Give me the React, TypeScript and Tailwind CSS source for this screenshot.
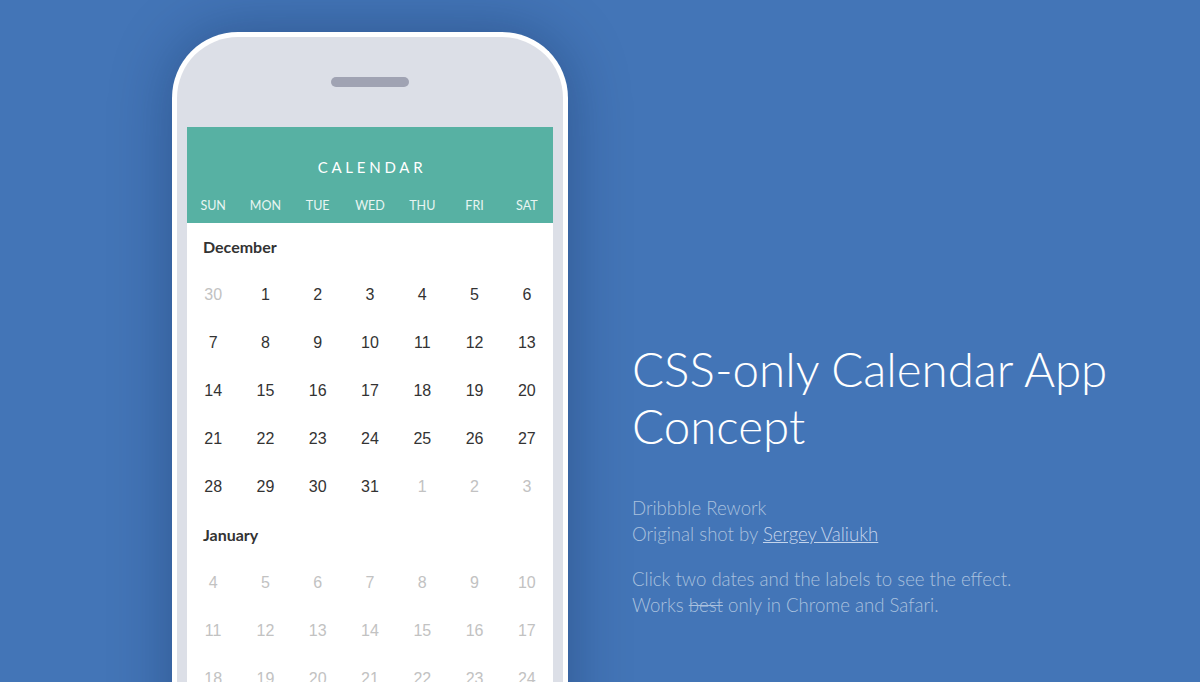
const DAYS = ['SUN', 'MON', 'TUE', 'WED', 'THU', 'FRI', 'SAT']

type Cell = { n: number; muted?: boolean }

const december: Cell[] = [
  { n: 30, muted: true },
  ...Array.from({ length: 31 }, (_, i) => ({ n: i + 1 })),
  { n: 1, muted: true },
  { n: 2, muted: true },
  { n: 3, muted: true },
]

const january: Cell[] = Array.from({ length: 21 }, (_, i) => ({ n: i + 4, muted: true }))

function Month({ name, cells }: { name: string; cells: Cell[] }) {
  return (
    <div>
      <div className="h-[48px] flex items-center px-4 text-[16px] font-bold text-[#333] font-['Lato',sans-serif]">
        {name}
      </div>
      <div className="grid grid-cols-7">
        {cells.map((c, i) => (
          <div
            key={i}
            className={`h-[48px] flex items-center justify-center text-[16px] font-['Liberation_Sans',Arial,sans-serif] ${
              c.muted ? 'text-[#c2c2c2]' : 'text-[#333]'
            }`}
          >
            {c.n}
          </div>
        ))}
      </div>
    </div>
  )
}

export default function App() {
  return (
    <div className="h-[682px] w-[1200px] overflow-hidden bg-[#4375b7] flex items-start font-['Lato',sans-serif]">
      {/* phone */}
      <div className="ml-[172px] mt-[32px] w-[396px] h-[900px] shrink-0 rounded-t-[66px] border-[5px] border-b-0 border-white bg-[#dcdfe7] px-[10px] pt-[40px] shadow-[0_0_60px_rgba(10,30,70,0.35)]">
        <div className="mx-auto w-[78px] h-[10px] rounded-full bg-[#a0a3b3]" />
        <div className="mt-[40px] bg-white h-[800px]">
          <div className="h-[96px] bg-[#57b1a3] flex flex-col">
            <div className="pt-[31px] h-[60px] text-center text-[15px] leading-[18px] tracking-[0.25em] pl-[4px] text-white">
              CALENDAR
            </div>
            <div className="grid grid-cols-7 mt-auto pb-[9px]">
              {DAYS.map((d) => (
                <div key={d} className="text-center text-[12.5px] leading-[16px] text-[#e8f5f2]">
                  {d}
                </div>
              ))}
            </div>
          </div>
          <Month name="December" cells={december} />
          <Month name="January" cells={january} />
        </div>
      </div>

      {/* description */}
      <div className="ml-[64px] pt-[340px] w-[520px] font-light">
        <h1 className="text-[47.5px] leading-[1.2] text-white font-light">
          CSS-only Calendar App Concept
        </h1>
        <p className="mt-[41px] text-[18.6px] leading-[26px] text-[#aac1de]">
          Dribbble Rework
          <br />
          Original shot by{' '}
          <a href="#" className="underline text-[#c3d4ec]">
            Sergey Valiukh
          </a>
        </p>
        <p className="mt-[19px] text-[18.6px] leading-[26px] text-[#aac1de]">
          Click two dates and the labels to see the effect.
          <br />
          Works <s>best</s> only in Chrome and Safari.
        </p>
      </div>
    </div>
  )
}
